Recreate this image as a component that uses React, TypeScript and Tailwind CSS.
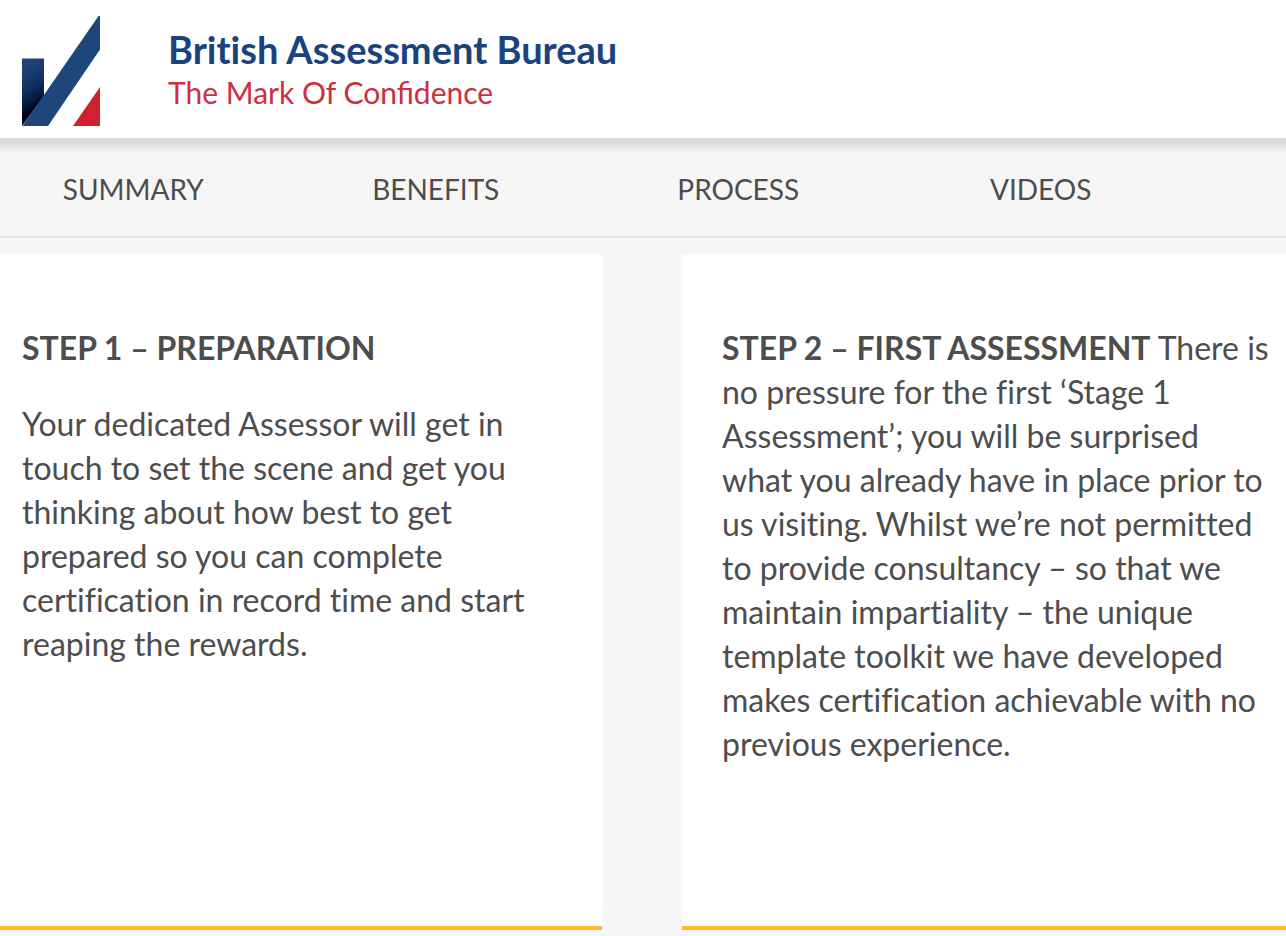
import React from "react";

const navLinks = [
  { label: "SUMMARY", href: "#summary" },
  { label: "BENEFITS", href: "#benefits" },
  { label: "PROCESS", href: "#process" },
  { label: "VIDEOS", href: "#videos" },
];

const Logo: React.FC = () => (
  <svg
    width="78"
    height="110"
    viewBox="0 0 78 110"
    role="img"
    aria-label="British Assessment Bureau"
    className="shrink-0"
  >
    <defs>
      <linearGradient
        id="fold"
        gradientUnits="userSpaceOnUse"
        x1="-6"
        y1="58"
        x2="16"
        y2="92"
      >
        <stop offset="0" stopColor="#1e4377" />
        <stop offset="0.5" stopColor="#0f2e5c" />
        <stop offset="0.8" stopColor="#05143a" />
        <stop offset="1" stopColor="#00001c" />
      </linearGradient>
    </defs>
    <path d="M0 42.5H22V80L0 110Z" fill="url(#fold)" />
    <path d="M76.5 0H78V33.5L26 110H0.5Z" fill="#1f467b" />
    <path d="M78 71V110H51Z" fill="#d0212f" />
  </svg>
);

const App: React.FC = () => {
  return (
    <div className="min-h-screen bg-[#f6f6f6] pb-1.5 font-['Lato',sans-serif] text-[#4d4d4d]">
      {/* Header */}
      <header className="flex h-[138px] items-start gap-[68px] bg-white px-[22px] pt-4">
        <Logo />
        <div>
          <p className="mt-[9px] text-[38px] leading-12 font-bold text-[#19427e] [font-variant-ligatures:none]">
            British Assessment Bureau
          </p>
          <p className="text-[30px] leading-[38px] text-[#cd2f40]">
            The Mark Of Confidence
          </p>
        </div>
      </header>

      {/* Navigation */}
      <div className="h-[100px] border-b-2 border-[#e4e4e4] bg-linear-to-b from-[#dadada] from-[3px] to-[#f6f6f6] to-[16px] pt-[31px]">
        <nav className="mr-[94px] -ml-[18px] grid grid-cols-4 text-center text-[28px] leading-10">
          {navLinks.map((link) => (
            <a key={link.href} href={link.href}>
              {link.label}
            </a>
          ))}
        </nav>
      </div>

      {/* Steps */}
      <main className="mt-4 grid grid-cols-[602fr_604fr] gap-20 text-[32px] leading-[44px] [font-variant-ligatures:none]">
        <section className="min-h-[676px] border-b-4 border-[#fdb92c] bg-white pt-[72px] pr-10 pl-[22px]">
          <h2 className="mb-8 font-bold">STEP 1 – PREPARATION</h2>
          <p>
            Your dedicated Assessor will get in touch to set the scene and get
            you thinking about how best to get prepared so you can complete
            certification in record time and start reaping the rewards.
          </p>
        </section>
        <section className="min-h-[676px] border-b-4 border-[#fdb92c] bg-white pt-[72px] pr-3 pl-10">
          <p>
            <strong>STEP 2 – FIRST ASSESSMENT</strong> There is no pressure for
            the first ‘Stage 1 Assessment’; you will be surprised what you
            already have in place prior to us visiting. Whilst we’re not
            permitted to provide consultancy – so that we maintain impartiality
            – the unique template toolkit we have developed makes certification
            achievable with no previous experience.
          </p>
        </section>
      </main>
    </div>
  );
};

export default App;
